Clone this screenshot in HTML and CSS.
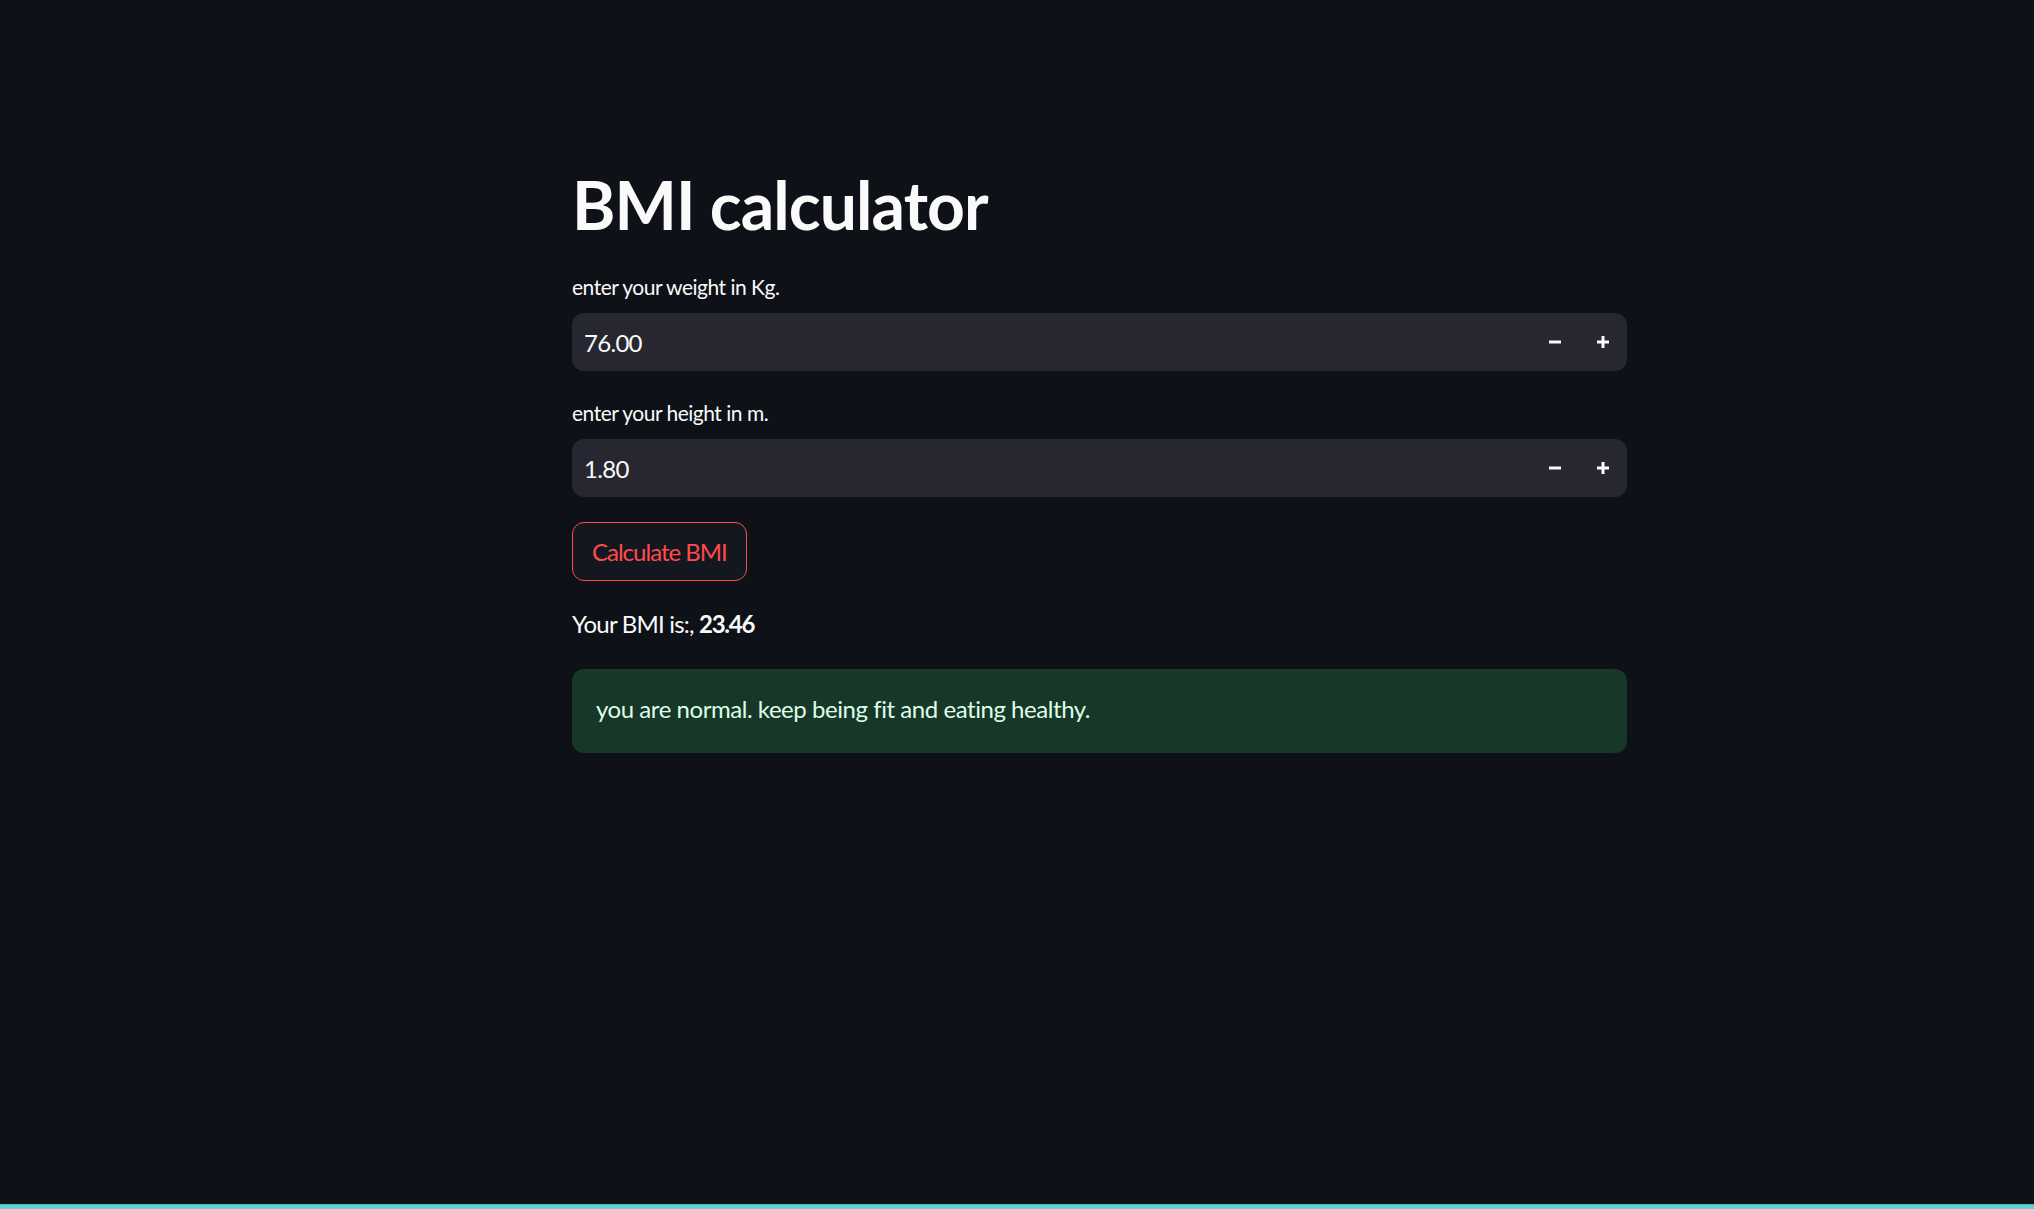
FILE: index.html
```html
<!DOCTYPE html>
<html lang="en">
<head>
<meta charset="utf-8">
<title>BMI calculator</title>
<link rel="stylesheet" href="styles.css">
</head>
<body>
<main class="app">
  <div class="block">
    <h1 class="title">BMI calculator</h1>

    <div class="widget">
      <label class="label">enter your weight in Kg.</label>
      <div class="number-input">
        <span class="value">76.00</span>
        <div class="steppers">
          <button class="step" aria-label="decrement">
            <svg width="14" height="14" viewBox="0 0 14 14"><path d="M1 7h12" stroke="#fafafa" stroke-width="3"/></svg>
          </button>
          <button class="step" aria-label="increment">
            <svg width="14" height="14" viewBox="0 0 14 14"><path d="M1 7h12M7 1v12" stroke="#fafafa" stroke-width="3"/></svg>
          </button>
        </div>
      </div>
    </div>

    <div class="widget">
      <label class="label">enter your height in m.</label>
      <div class="number-input">
        <span class="value">1.80</span>
        <div class="steppers">
          <button class="step" aria-label="decrement">
            <svg width="14" height="14" viewBox="0 0 14 14"><path d="M1 7h12" stroke="#fafafa" stroke-width="3"/></svg>
          </button>
          <button class="step" aria-label="increment">
            <svg width="14" height="14" viewBox="0 0 14 14"><path d="M1 7h12M7 1v12" stroke="#fafafa" stroke-width="3"/></svg>
          </button>
        </div>
      </div>
    </div>

    <div class="btn-row">
      <button class="calc-btn">Calculate BMI</button>
    </div>

    <p class="result">Your BMI is:, <strong>23.46</strong></p>

    <div class="alert-success">you are normal. keep being fit and eating healthy.</div>
  </div>
</main>
<div class="bottom-bar"></div>
</body>
</html>
```

FILE: styles.css
```css
html, body {
  margin: 0;
  padding: 0;
}

body {
  background: #0e1117;
  color: #fafafa;
  font-family: Lato, "Noto Sans", "Liberation Sans", sans-serif;
  min-height: 100vh;
  display: flex;
  flex-direction: column;
}

.app {
  flex: 1;
  padding: 165px 0 0 572px;
}

.block {
  width: 1055px;
  display: flex;
  flex-direction: column;
  gap: 24px;
}

.title {
  margin: 0 0 1px 0;
  font-size: 66px;
  font-weight: 700;
  line-height: 1.2;
  letter-spacing: -0.9px;
  color: #fafafa;
}

.widget {
  display: flex;
  flex-direction: column;
}

.label {
  font-size: 21px;
  line-height: 36px;
  height: 36px;
  margin-bottom: 8px;
  letter-spacing: -0.5px;
  color: #fafafa;
}

.number-input {
  height: 58px;
  background: #262730;
  border-radius: 12px;
  display: flex;
  align-items: center;
  justify-content: space-between;
  padding-left: 12px;
}

.value {
  font-size: 24px;
  letter-spacing: -0.7px;
  color: #fafafa;
}

.steppers {
  display: flex;
  height: 100%;
}

.step {
  width: 48px;
  height: 100%;
  border: none;
  background: transparent;
  padding: 0;
  display: flex;
  align-items: center;
  justify-content: center;
}

.btn-row {
  display: flex;
  margin-top: 1px;
}

.calc-btn {
  height: 59px;
  padding: 0 19px;
  border: 1px solid #ff4b4b;
  border-radius: 12px;
  background: #131720;
  color: #ff4b4b;
  font-family: inherit;
  font-size: 24px;
  letter-spacing: -1px;
}

.result {
  margin: 0;
  font-size: 24px;
  line-height: 38.4px;
  letter-spacing: -0.8px;
}

.result strong {
  font-weight: 700;
  letter-spacing: -1.2px;
}

.alert-success {
  margin-top: 1px;
  padding: 21px 24px 25px;
  border-radius: 12px;
  background: #173828;
  color: #dffde9;
  font-size: 24px;
  line-height: 38.4px;
  letter-spacing: -0.45px;
}

.bottom-bar {
  height: 4px;
  background: #62d2d0;
  border-top: 1px solid #4fb6b6;
}
```
